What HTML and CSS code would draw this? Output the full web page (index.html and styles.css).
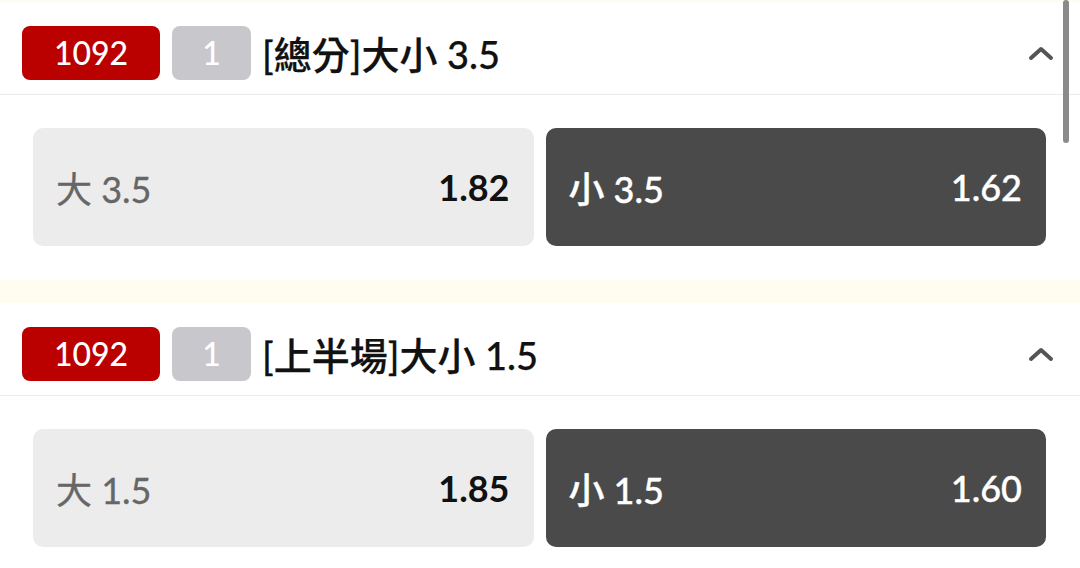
FILE: index.html
```html
<!DOCTYPE html>
<html lang="zh-TW">

<head>
    <meta charset="UTF-8">
    <meta name="viewport" content="width=device-width, initial-scale=1.0">
    <title>大小盤</title>
    <link rel="stylesheet" href="styles.css">
</head>

<body>
    <div class="market-list">
        <!-- 總分 -->
        <div class="market-card">
            <div class="market-header">
                <span class="badge badge-code">1092</span>
                <span class="badge badge-count">1</span>
                <span class="market-title">[總分]大小 3.5</span>
                <svg class="chevron" width="26" height="16" viewBox="0 0 26 16">
                    <polyline points="3,13 13,4 23,13" />
                </svg>
            </div>
            <div class="market-body">
                <div class="odd-btn">
                    <span class="odd-label">大 3.5</span>
                    <span class="odd-price">1.82</span>
                </div>
                <div class="odd-btn selected">
                    <span class="odd-label">小 3.5</span>
                    <span class="odd-price">1.62</span>
                </div>
            </div>
        </div>

        <!-- 上半場 -->
        <div class="market-card">
            <div class="market-header">
                <span class="badge badge-code">1092</span>
                <span class="badge badge-count">1</span>
                <span class="market-title">[上半場]大小 1.5</span>
                <svg class="chevron" width="26" height="16" viewBox="0 0 26 16">
                    <polyline points="3,13 13,4 23,13" />
                </svg>
            </div>
            <div class="market-body">
                <div class="odd-btn">
                    <span class="odd-label">大 1.5</span>
                    <span class="odd-price">1.85</span>
                </div>
                <div class="odd-btn selected">
                    <span class="odd-label">小 1.5</span>
                    <span class="odd-price">1.60</span>
                </div>
            </div>
        </div>
    </div>

    <div class="scrollbar"></div>
</body>

</html>
```

FILE: styles.css
```css
body {
    margin: 0;
    height: 568px;
    overflow: hidden;
    background: #fffcf0;
    font-family: 'Lato', 'Noto Sans CJK TC', sans-serif;
}

.market-list {
    display: flex;
    flex-direction: column;
    gap: 23px;
    padding-top: 2px;
}

.market-card {
    background: #fff;
}

.market-header {
    display: flex;
    align-items: center;
    padding: 23px 26px 14px 22px;
    border-bottom: 1px solid #ebebeb;
}

.badge {
    height: 54px;
    display: flex;
    align-items: center;
    justify-content: center;
    border-radius: 8px;
    color: #fff;
    font-size: 32px;
    font-weight: 500;
}

.badge-code {
    width: 138px;
    background: #bb0000;
}

.badge-count {
    width: 79px;
    margin-left: 12px;
    background: #c8c8cc;
}

.market-title {
    flex: 1;
    margin-left: 11px;
    font-size: 38px;
    font-weight: 500;
    color: #111;
    -webkit-text-stroke: 0.25px #111;
}

.chevron polyline {
    fill: none;
    stroke: #555;
    stroke-width: 4;
    stroke-linecap: round;
    stroke-linejoin: round;
}

.market-body {
    display: flex;
    gap: 12px;
    padding: 33px 34px 34px 33px;
}

.odd-btn {
    flex: 1;
    height: 118px;
    display: flex;
    align-items: center;
    justify-content: space-between;
    padding: 0 24px 0 23px;
    border-radius: 10px;
    background: #ececec;
    font-size: 36px;
}

.odd-label {
    color: #666;
    -webkit-text-stroke: 0.3px #666;
}

.odd-price {
    color: #111;
    font-weight: 700;
}

.selected {
    background: #4a4a4a;
}

.selected .odd-label,
.selected .odd-price {
    color: #fff;
    font-weight: 500;
    -webkit-text-stroke: 0.4px #fff;
}

.scrollbar {
    position: absolute;
    top: 0;
    right: 11px;
    width: 6px;
    height: 143px;
    border-radius: 3px;
    background: #8a8a8a;
}
```
